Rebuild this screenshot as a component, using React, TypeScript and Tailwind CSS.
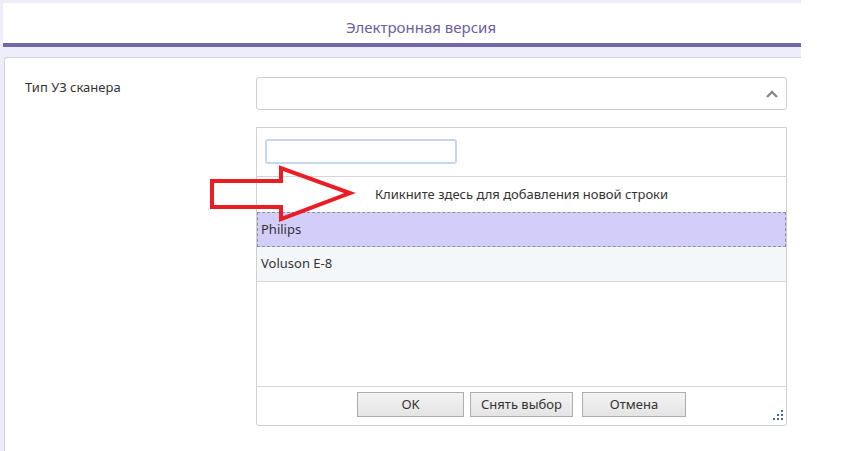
import React from 'react'

const font = "font-['Noto_Sans','Open_Sans',sans-serif]"

function ChevronUp() {
  return (
    <svg width="14" height="10" viewBox="0 0 14 10" fill="none">
      <polyline points="2,8 7,3 12,8" stroke="#8a8a8a" strokeWidth="2.4" strokeLinejoin="miter" />
    </svg>
  )
}

function Grip() {
  return (
    <svg width="10" height="10" viewBox="0 0 10 10" className="absolute right-[3px] bottom-[5px]">
      <rect x="8" y="0" width="2" height="2" fill="#3d6aa8" />
      <rect x="4" y="4" width="2" height="2" fill="#3d6aa8" />
      <rect x="8" y="4" width="2" height="2" fill="#3d6aa8" />
      <rect x="0" y="8" width="2" height="2" fill="#3d6aa8" />
      <rect x="4" y="8" width="2" height="2" fill="#3d6aa8" />
      <rect x="8" y="8" width="2" height="2" fill="#3d6aa8" />
    </svg>
  )
}

function Btn({ label, w }: { label: string; w: string }) {
  return (
    <button
      className={`${w} h-[25px] border border-[#adadad] bg-gradient-to-b from-[#f3f3f3] to-[#e4e4e4] text-[13px] text-[#333] leading-none`}>
      {label}
    </button>
  )
}

export default function App() {
  return (
    <div className={`relative w-[849px] h-[451px] bg-white overflow-hidden ${font}`}>
      <div className="w-[801px] h-full bg-[#eeedfc] pt-[3px] pl-[3px] flex flex-col">
        {/* header */}
        <div className="h-[44px] bg-white border-b-4 border-[#7567a8] flex justify-center pt-[14px] pl-[38px]">
          <span className="text-[15px] leading-[20px] text-[#6a60a2]">Электронная версия</span>
        </div>

        {/* form panel */}
        <div className="mt-[10px] ml-[1px] flex-1 bg-white border-l border-t border-[#d2d2d2] rounded-tl-[3px] pt-[19px] flex">
          <div className="w-[251px] pl-[20px] text-[13px] leading-[20px] text-[#333]">Тип УЗ сканера</div>

          <div className="w-[531px] flex flex-col">
            <div className="h-[33px] border border-[#cfcfcf] rounded-[3px] flex items-center justify-end pr-[7px]">
              <ChevronUp />
            </div>

            <div className="relative mt-[17px] h-[299px] border border-[#d0d0d0] rounded-b-[3px] flex flex-col">
              <div className="h-[49px] border-b border-[#d6d6d6] pt-[11px] pl-[8px]">
                <div className="w-[192px] h-[25px] border-2 border-[#c5d6ef] rounded-[3px]" />
              </div>
              <div className="h-[35px] pt-[1px] flex items-center justify-center text-[13px] text-[#333]">
                Кликните здесь для добавления новой строки
              </div>
              <div className="h-[35px] bg-[#d3cdf9] border border-dashed border-[#8f8f9a] flex items-center pl-[3px] text-[13px] text-[#333]">
                Philips
              </div>
              <div className="h-[35px] bg-[#f3f7fa] border-b border-[#d8d8d8] flex items-center pl-[4px] text-[13px] text-[#333]">
                Voluson E-8
              </div>
              <div className="flex-1" />
              <div className="h-[39px] border-t border-[#d6d6d6] pt-[5px] flex justify-center gap-[6px]">
                <Btn label="OK" w="w-[107px]" />
                <Btn label="Снять выбор" w="w-[103px]" />
                <Btn label="Отмена" w="w-[104px] ml-[3px]" />
              </div>
              <Grip />
            </div>
          </div>
        </div>
      </div>

      {/* red annotation arrow */}
      <svg className="absolute left-0 top-0 pointer-events-none" width="849" height="451">
        <polygon
          points="212,181 281,181 281,168 350,193 281,219 281,207 212,207"
          fill="none"
          stroke="#ec1c24"
          strokeWidth="4"
          strokeLinejoin="miter"
        />
      </svg>
    </div>
  )
}
